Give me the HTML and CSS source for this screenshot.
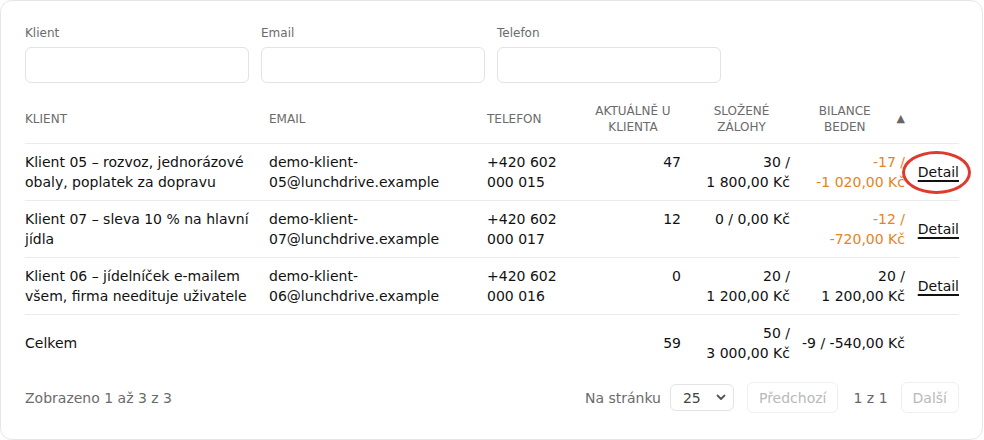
FILE: index.html
```html
<!DOCTYPE html>
<html lang="cs">
<head>
<meta charset="utf-8">
<title>Klienti</title>
<link rel="stylesheet" href="styles.css">
</head>
<body>
<div class="card">
  <div class="filters">
    <label class="field"><span class="field-label">Klient</span><input class="input" type="text"></label>
    <label class="field"><span class="field-label">Email</span><input class="input" type="text"></label>
    <label class="field"><span class="field-label">Telefon</span><input class="input" type="text"></label>
  </div>
  <table class="grid">
    <colgroup>
      <col class="c-client"><col class="c-email"><col class="c-phone"><col class="c-now"><col class="c-dep"><col class="c-bal"><col class="c-act">
    </colgroup>
    <thead>
      <tr>
        <th>Klient</th>
        <th>Email</th>
        <th>Telefon</th>
        <th class="num-h">Aktuálně u klienta</th>
        <th class="num-h">Složené zálohy</th>
        <th class="sort-h"><div class="sort-wrap"><span class="sort-text">Bilance beden</span><span class="arrow">▲</span></div></th>
        <th></th>
      </tr>
    </thead>
    <tbody>
      <tr>
        <td>Klient 05 – rozvoz, jednorázové obaly, poplatek za dopravu</td>
        <td>demo-klient-05@lunchdrive.example</td>
        <td>+420 602 000 015</td>
        <td class="num">47</td>
        <td class="num">30 / 1&nbsp;800,00&nbsp;Kč</td>
        <td class="num neg">-17 / -1&nbsp;020,00&nbsp;Kč</td>
        <td class="act"><span class="detail-wrap"><a class="detail" href="#">Detail</a><span class="mark"></span></span></td>
      </tr>
      <tr>
        <td>Klient 07 – sleva 10 % na hlavní jídla</td>
        <td>demo-klient-07@lunchdrive.example</td>
        <td>+420 602 000 017</td>
        <td class="num">12</td>
        <td class="num">0 / 0,00&nbsp;Kč</td>
        <td class="num neg">-12 / -720,00&nbsp;Kč</td>
        <td class="act"><a class="detail" href="#">Detail</a></td>
      </tr>
      <tr>
        <td>Klient 06 – jídelníček e-mailem všem, firma needituje uživatele</td>
        <td>demo-klient-06@lunchdrive.example</td>
        <td>+420 602 000 016</td>
        <td class="num">0</td>
        <td class="num">20 / 1&nbsp;200,00&nbsp;Kč</td>
        <td class="num">20 / 1&nbsp;200,00&nbsp;Kč</td>
        <td class="act"><a class="detail" href="#">Detail</a></td>
      </tr>
    </tbody>
    <tfoot>
      <tr>
        <td>Celkem</td>
        <td></td>
        <td></td>
        <td class="num">59</td>
        <td class="num">50 / 3&nbsp;000,00&nbsp;Kč</td>
        <td class="num nowrap">-9 / -540,00&nbsp;Kč</td>
        <td></td>
      </tr>
    </tfoot>
  </table>
  <div class="pager">
    <div class="info">Zobrazeno 1 až 3 z 3</div>
    <div class="pager-right">
      <span class="muted">Na stránku</span>
      <span class="select"><span>25</span><svg class="chev" width="10" height="7" viewBox="0 0 10 7"><path d="M1.5 1.5 L5 5 L8.5 1.5" fill="none" stroke="#555" stroke-width="1.8" stroke-linecap="round" stroke-linejoin="round"/></svg></span>
      <button class="btn btn-prev" disabled>Předchozí</button>
      <span class="pages">1 z 1</span>
      <button class="btn btn-next" disabled>Další</button>
    </div>
  </div>
</div>
</body>
</html>
```

FILE: styles.css
```css
* { box-sizing: border-box; }
html, body { margin: 0; padding: 0; background: #fff; }
body {
  font-family: "DejaVu Sans", Verdana, sans-serif;
  color: #111;
  font-size: 14px;
}
.card {
  width: 983px;
  height: 440px;
  border: 1px solid #e6e6e6;
  border-radius: 12px;
  padding: 24px 23px 24px 24px;
  background: #fff;
}
.filters {
  display: grid;
  grid-template-columns: 224px 224px 224px;
  gap: 12px;
}
.field { display: flex; flex-direction: column; }
.field-label {
  font-size: 12px;
  line-height: 16px;
  color: #6b6b6b;
  margin-bottom: 6px;
}
.input {
  height: 36px;
  border: 1px solid #e3e3e3;
  border-radius: 6px;
  background: #fff;
  font: inherit;
  padding: 0 10px;
  outline: none;
}
.grid {
  margin-top: 12px;
  width: 934px;
  border-collapse: collapse;
  table-layout: fixed;
}
.c-client { width: 238px; }
.c-email { width: 218px; }
.c-phone { width: 98px; }
.c-now { width: 108px; }
.c-dep { width: 109px; }
.c-bal { width: 115px; }
.c-act { width: 48px; }
th {
  font-size: 12px;
  line-height: 16px;
  font-weight: normal;
  color: #6b6b6b;
  text-transform: uppercase;
  text-align: left;
  padding: 8px 6px;
  vertical-align: middle;
  border-bottom: 1px solid #ebebeb;
}
th:first-child, td:first-child { padding-left: 0; }
th:last-child, td:last-child { padding-right: 0; }
.num-h { text-align: center; }
.sort-wrap { display: flex; align-items: center; justify-content: flex-end; }
.sort-text { text-align: center; }
.arrow { font-size: 11px; margin-left: 9px; color: #666; }
td {
  line-height: 20px;
  padding: 8px 6px;
  vertical-align: top;
  border-bottom: 1px solid #ebebeb;
}
tfoot td { border-bottom: none; vertical-align: middle; }
.num { text-align: right; }
.neg { color: #e8821e; }
.nowrap { white-space: nowrap; }
.act { vertical-align: middle; text-align: right; }
.detail {
  color: #111;
  text-decoration: underline;
  text-decoration-thickness: 1.5px;
  text-underline-offset: 3px;
}
.detail-wrap { position: relative; display: inline-block; }
.mark {
  position: absolute;
  left: -16px;
  top: -11px;
  width: 69px;
  height: 43px;
  border: 3px solid #de3b2f;
  border-radius: 50%;
  pointer-events: none;
}
.pager {
  margin-top: 11px;
  display: flex;
  justify-content: space-between;
  align-items: center;
  height: 31px;
}
.info { color: #6b6b6b; }
.pager-right { display: flex; align-items: center; }
.muted { color: #6b6b6b; }
.select {
  margin-left: 9px;
  width: 64px;
  height: 27px;
  border: 1px solid #e3e3e3;
  border-radius: 6px;
  display: flex;
  align-items: center;
  justify-content: space-between;
  padding: 0 7px 0 12px;
  color: #444;
}
.btn {
  height: 31px;
  border: 1px solid #efefef;
  border-radius: 6px;
  background: #fff;
  font: inherit;
  color: #b9b9b9;
  padding: 0 11px;
}
.btn-prev { margin-left: 13px; }
.pages { color: #666; margin-left: 15px; }
.btn-next { margin-left: 13px; }
```
